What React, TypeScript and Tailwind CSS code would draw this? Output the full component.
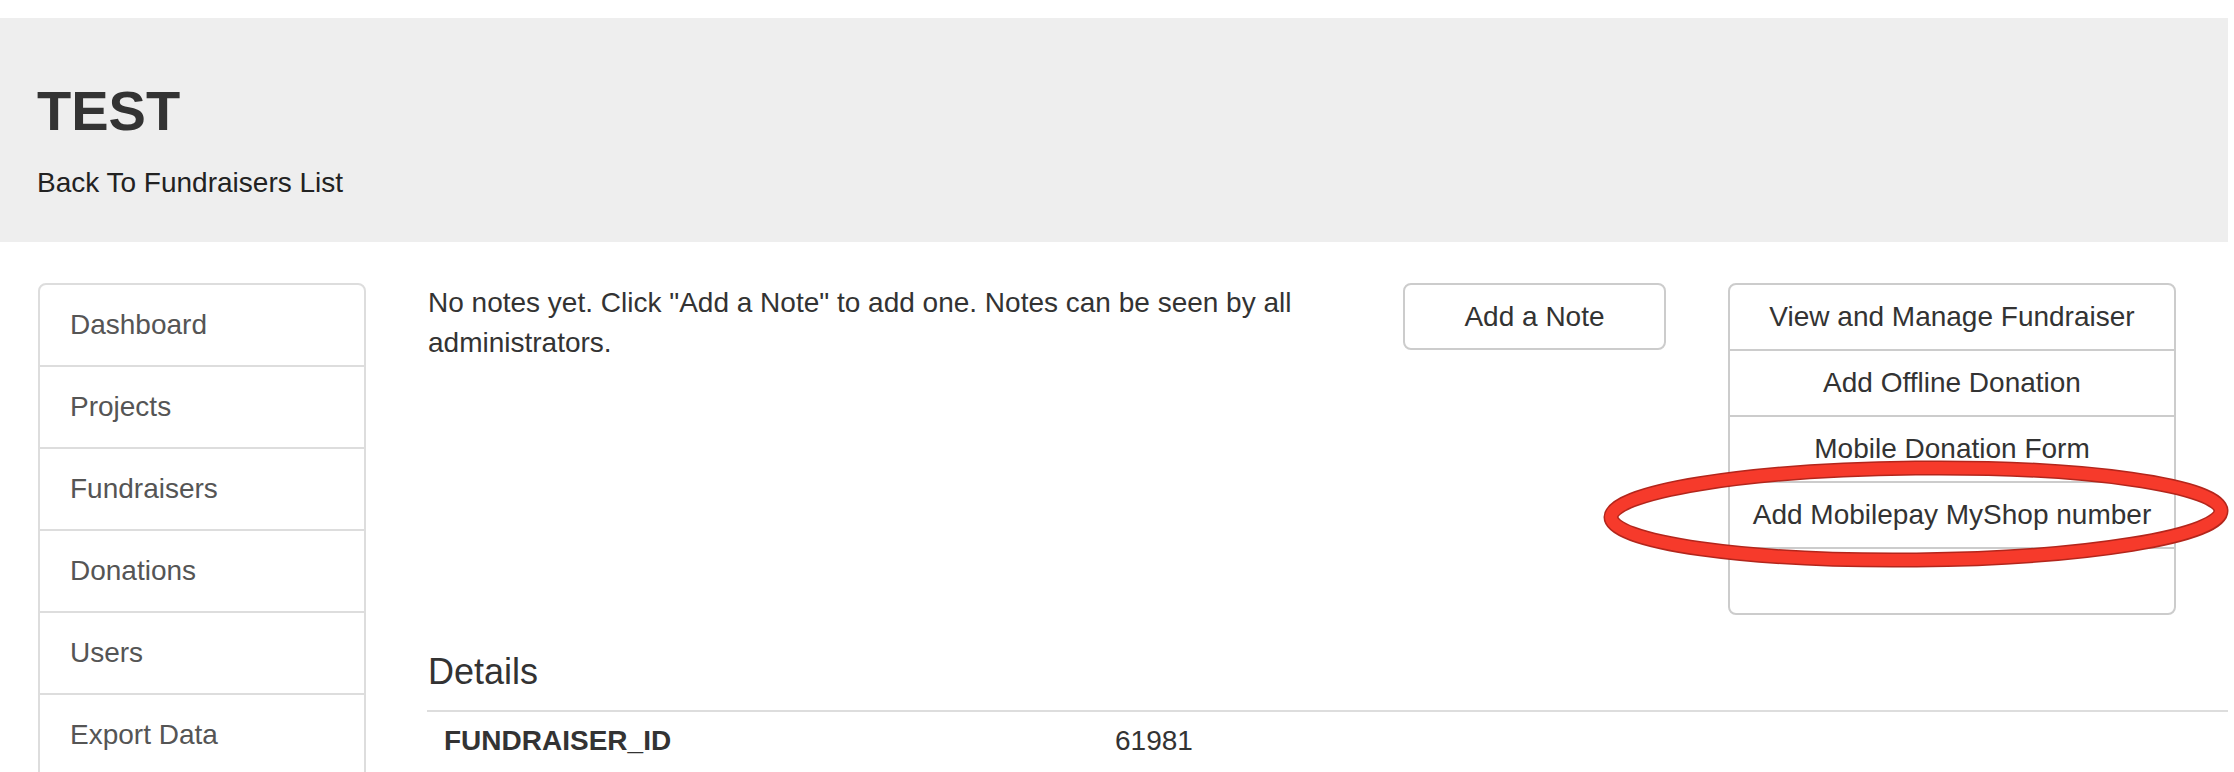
import React from 'react';

const navItems = ['Dashboard', 'Projects', 'Fundraisers', 'Donations', 'Users', 'Export Data'];

const actions = [
  'View and Manage Fundraiser',
  'Add Offline Donation',
  'Mobile Donation Form',
  'Add Mobilepay MyShop number',
  '',
];

const App: React.FC = () => {
  return (
    <div className="relative min-h-screen w-full overflow-hidden bg-white pt-[18px] font-['Liberation_Sans',Arial,sans-serif] text-[#333]">
      {/* page header */}
      <div className="mr-[6px] h-[224px] bg-[#eeeeee] pl-[37px] pt-[62px]">
        <h1 className="text-[56px] font-bold leading-[62px] text-[#333]">TEST</h1>
        <a className="mt-[21px] block text-[28px] leading-[40px] text-[#222]">Back To Fundraisers List</a>
      </div>

      <div className="flex pl-[38px] pr-[6px] pt-[41px]">
        {/* sidebar */}
        <div className="flex w-[328px] shrink-0 flex-col">
          {navItems.map((item, i) => (
            <a
              key={item}
              className={`-mb-[2px] block border-2 border-[#dddddd] px-[30px] py-[20px] text-[28px] leading-[40px] text-[#555] ${
                i === 0 ? 'rounded-t-[8px]' : ''
              }`}
            >
              {item}
            </a>
          ))}
        </div>

        {/* main column */}
        <div className="ml-[61px] flex-1">
          <div className="flex items-start">
            <p className="w-[945px] shrink-0 pl-[1px] text-[28px] leading-[40px]">
              No notes yet. Click "Add a Note" to add one. Notes can be seen by all administrators.
            </p>
            <button className="ml-[31px] h-[67px] w-[263px] shrink-0 rounded-[8px] border-2 border-[#cccccc] bg-white text-[28px] leading-[40px] text-[#333]">
              Add a Note
            </button>
            <div className="ml-[62px] flex w-[448px] shrink-0 flex-col">
              {actions.map((label, i) => (
                <button
                  key={i}
                  className={`-mb-[2px] h-[68px] w-full border-2 border-[#cccccc] bg-white text-[28px] leading-[40px] text-[#333] ${
                    i === 0 ? 'rounded-t-[8px]' : ''
                  } ${i === actions.length - 1 ? 'rounded-b-[8px]' : ''}`}
                >
                  {label}
                </button>
              ))}
            </div>
          </div>

          <h4 className="mt-[39px] pl-[1px] text-[36px] font-normal leading-[40px] text-[#333]">Details</h4>
          <div className="mt-[18px] h-[2px] bg-[#dddddd]" />
          <div className="flex pt-[9px] text-[28px] leading-[40px]">
            <div className="w-[671px] shrink-0 pl-[17px] font-bold">FUNDRAISER_ID</div>
            <div className="pl-[17px]">61981</div>
          </div>
        </div>
      </div>

      {/* red annotation ring */}
      <svg
        className="pointer-events-none absolute left-[1598px] top-[456px]"
        width="636"
        height="116"
        viewBox="0 0 636 116"
      >
        <g transform="rotate(-0.6 318 58)">
          <ellipse cx="318" cy="58" rx="305" ry="46" fill="none" stroke="#b3261c" strokeWidth="15" />
          <ellipse cx="318" cy="58" rx="305" ry="46" fill="none" stroke="#f63a2b" strokeWidth="12" />
        </g>
      </svg>
    </div>
  );
};

export default App;
